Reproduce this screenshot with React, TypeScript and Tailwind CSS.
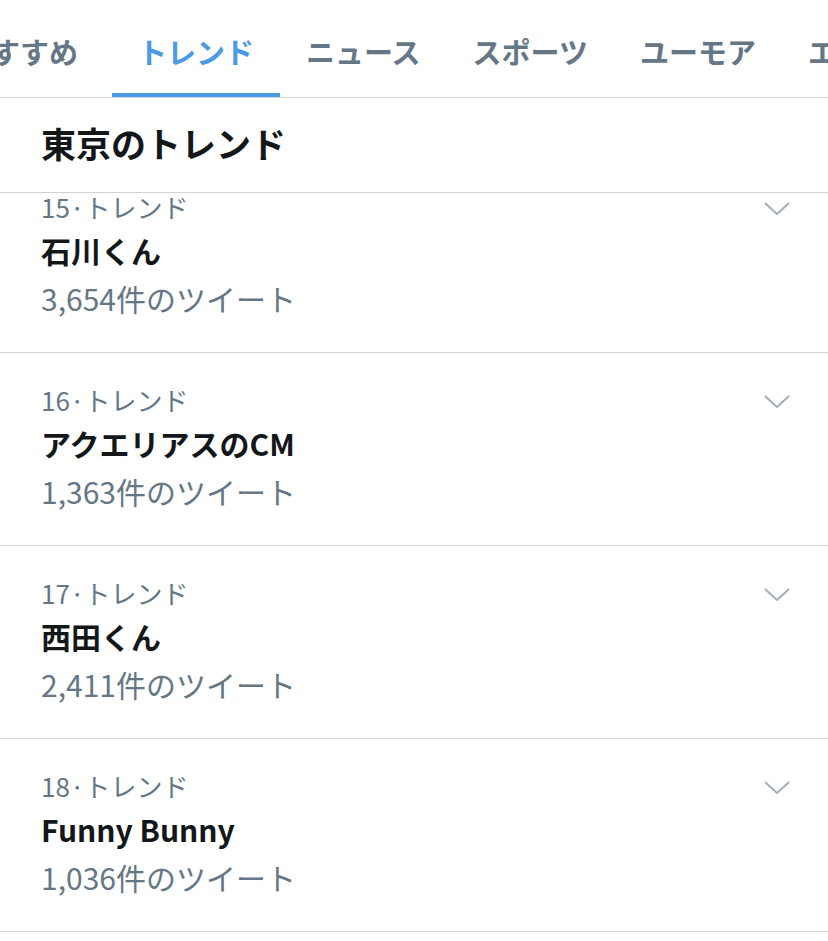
const tabs = ["おすすめ", "トレンド", "ニュース", "スポーツ", "ユーモア", "エンタメ"];

const trends = [
  { rank: 15, name: "石川くん", count: "3,654" },
  { rank: 16, name: "アクエリアスのCM", count: "1,363" },
  { rank: 17, name: "西田くん", count: "2,411" },
  { rank: 18, name: "Funny Bunny", count: "1,036" },
];

const font = {
  fontFamily: '"Noto Sans CJK JP", "Noto Sans", sans-serif',
};

function Chevron() {
  return (
    <svg width="26" height="14" viewBox="0 0 26 14" fill="none" className="mt-[10px] shrink-0">
      <polyline
        points="1.5,1.5 13,12 24.5,1.5"
        stroke="#a3b0ba"
        strokeWidth="2"
        strokeLinecap="round"
        strokeLinejoin="round"
      />
    </svg>
  );
}

export default function App() {
  return (
    <div className="h-[941px] w-[828px] overflow-hidden bg-white" style={font}>
      {/* Tabs */}
      <div className="flex h-[98px] border-b border-[#ccd3d9] overflow-hidden">
        <div className="ml-[-64px] flex shrink-0">
          {tabs.map((tab, i) => (
            <div
              key={tab}
              className={`relative flex shrink-0 items-center px-[26px] pt-[6px] text-[29px] font-bold leading-none ${
                i === 0 ? "pr-[34px]" : ""
              } ${i === 1 ? "text-[#4a9be3]" : "text-[#657786]"}`}
            >
              {tab}
              {i === 1 && (
                <span className="absolute bottom-0 left-0 right-0 h-[4px] bg-[#4a9be3]" />
              )}
            </div>
          ))}
        </div>
      </div>

      {/* Header */}
      <div className="flex h-[95px] items-center border-b border-[#ccd3d9] px-[41px] pb-[5px]">
        <h1 className="text-[35px] font-bold leading-none text-[#14171a]">
          東京のトレンド
        </h1>
      </div>

      {/* Trend list, scrolled a little */}
      <div className="mt-[-33px]">
        {trends.map((t) => (
          <div
            key={t.rank}
            className="h-[193px] border-b border-[#ccd3d9] pl-[41px] pr-[38px]"
          >
            <div className="flex items-start justify-between pt-[32px]">
              <div className="flex flex-col">
                <span className="text-[26px] leading-[30px] text-[#657786]">
                  {t.rank}·トレンド
                </span>
                <span className="mt-[13px] text-[30px] font-bold leading-[30px] text-[#14171a]">
                  {t.name}
                </span>
                <span className="mt-[18px] text-[30px] leading-[30px] text-[#657786]">
                  {t.count}件のツイート
                </span>
              </div>
              <Chevron />
            </div>
          </div>
        ))}
      </div>
    </div>
  );
}
